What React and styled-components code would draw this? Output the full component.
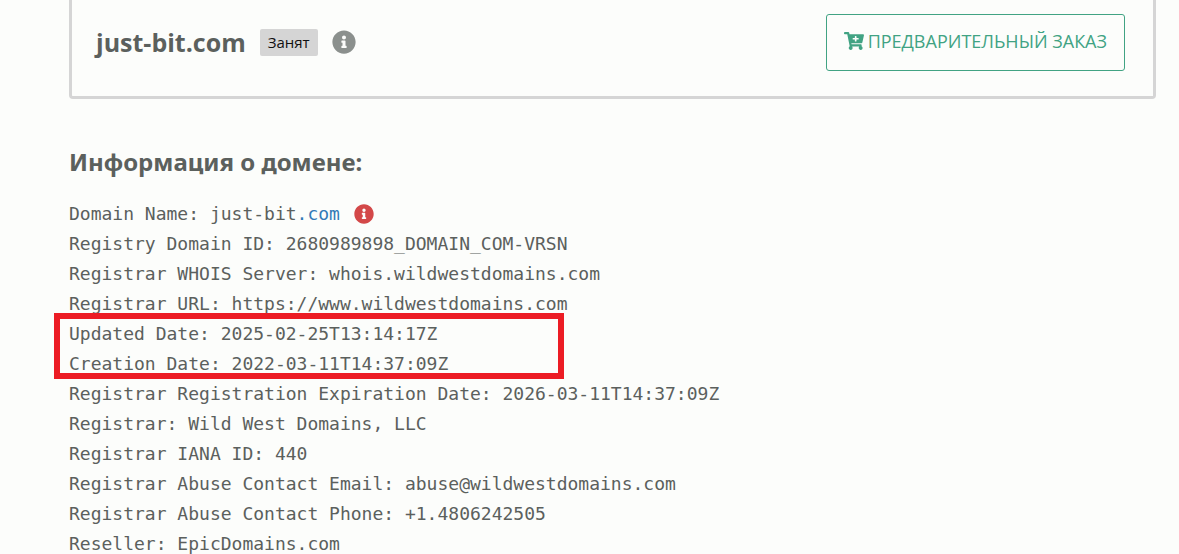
import React from "react";
import styled, { createGlobalStyle } from "styled-components";
import { FaCartPlus, FaInfoCircle } from "react-icons/fa";

const GlobalStyle = createGlobalStyle`
  *, *::before, *::after { box-sizing: border-box; }
  body {
    margin: 0;
    background: #fcfdfb;
    color: #5b605d;
    font-family: "Open Sans", "Noto Sans", sans-serif;
  }
`;

const Page = styled.main`
  padding: 0 23px 0 69px;
`;

const DomainCard = styled.section`
  display: flex;
  align-items: flex-start;
  justify-content: space-between;
  padding: 14px 28px 25px 24px;
  border: 3px solid #d5d5d5;
  border-top: 0;
  border-radius: 0 0 4px 4px;
`;

const DomainSummary = styled.div`
  display: flex;
  align-items: center;
  height: 56px;
`;

const DomainName = styled.h1`
  margin: 0 14px 0 0;
  font-size: 25px;
  line-height: 34px;
  font-weight: 700;
`;

const Status = styled.span`
  padding: 0 8px;
  border-radius: 2px;
  background: #d5d5d5;
  color: #111;
  font-size: 15px;
  line-height: 27px;
`;

const InfoButton = styled.button`
  display: flex;
  margin: 0 0 0 14px;
  padding: 0;
  border: 0;
  background: none;
  color: ${({ $color }) => $color};
  font-size: ${({ $size }) => $size}px;
  cursor: pointer;
`;

const OrderButton = styled.button`
  display: flex;
  align-items: center;
  gap: 4px;
  height: 57px;
  padding: 0 17px 3px;
  border: 1px solid #41a383;
  border-radius: 3px;
  background: transparent;
  color: #41a383;
  font-family: inherit;
  font-size: 18px;
  line-height: 24px;
  white-space: nowrap;
  cursor: pointer;

  svg { font-size: 20px; }
`;

const SectionTitle = styled.h2`
  margin: 46px 0 20px;
  font-family: "Noto Sans", "Open Sans", sans-serif;
  font-size: 24px;
  line-height: 34px;
  font-weight: 700;
`;

const Whois = styled.div`
  font-family: "DejaVu Sans Mono", monospace;
  font-size: 18px;
  line-height: 30px;
`;

const Record = styled.div`
  display: flex;
  align-items: center;
  height: 30px;
  white-space: nowrap;
`;

const ZoneLink = styled.a`
  color: #337ab7;
  text-decoration: none;
`;

const Marked = styled.div`
  position: relative;

  &::after {
    content: "";
    position: absolute;
    top: -6px;
    bottom: 0;
    left: -15px;
    width: 510px;
    border: 6px solid #ec1c24;
    pointer-events: none;
  }
`;

const registry = [
  "Registry Domain ID: 2680989898_DOMAIN_COM-VRSN",
  "Registrar WHOIS Server: whois.wildwestdomains.com",
  "Registrar URL: https://www.wildwestdomains.com",
];

const dates = [
  "Updated Date: 2025-02-25T13:14:17Z",
  "Creation Date: 2022-03-11T14:37:09Z",
];

const registrar = [
  "Registrar Registration Expiration Date: 2026-03-11T14:37:09Z",
  "Registrar: Wild West Domains, LLC",
  "Registrar IANA ID: 440",
  "Registrar Abuse Contact Email: abuse@wildwestdomains.com",
  "Registrar Abuse Contact Phone: +1.4806242505",
  "Reseller: EpicDomains.com",
];

const Records = ({ lines }) => lines.map((line) => <Record key={line}>{line}</Record>);

export default function App() {
  return (
    <>
      <GlobalStyle />
      <Page>
        <DomainCard>
          <DomainSummary>
            <DomainName>just-bit.com</DomainName>
            <Status>Занят</Status>
            <InfoButton $size={24} $color="#8b908d" aria-label="Информация">
              <FaInfoCircle />
            </InfoButton>
          </DomainSummary>
          <OrderButton>
            <FaCartPlus />
            ПРЕДВАРИТЕЛЬНЫЙ ЗАКАЗ
          </OrderButton>
        </DomainCard>

        <SectionTitle>Информация о домене:</SectionTitle>
        <Whois>
          <Record>
            Domain Name: just-bit<ZoneLink href="#com">.com</ZoneLink>
            <InfoButton $size={20} $color="#d34848" aria-label="О домене">
              <FaInfoCircle />
            </InfoButton>
          </Record>
          <Records lines={registry} />
          <Marked>
            <Records lines={dates} />
          </Marked>
          <Records lines={registrar} />
        </Whois>
      </Page>
    </>
  );
}
